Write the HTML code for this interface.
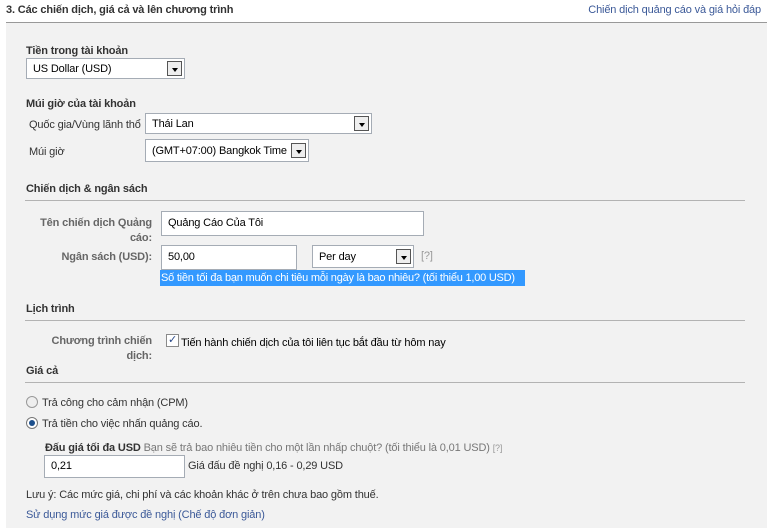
<!DOCTYPE html>
<html><head><meta charset="utf-8"><style>
*{margin:0;padding:0;box-sizing:border-box}
body{width:767px;height:528px;background:#fff;font-family:"Liberation Sans",Tahoma,sans-serif;font-size:11px;letter-spacing:-0.15px;color:#333;position:relative;overflow:hidden}
.a{position:absolute;white-space:nowrap;line-height:13px}
.b{font-weight:bold}
.bg{position:absolute;left:6px;top:23px;right:0;bottom:0;background:#f2f2f2}
.ln{position:absolute;height:1px;background:#b3b3b3}
.sel,.inp{position:absolute;background:#fff;border:1px solid #a5acb5;padding-left:6px;line-height:20px;color:#000}
.sel .ar{position:absolute;right:2px;top:2px;width:15px;height:15px;border:1px solid #555;background:#eee}
.sel .ar:after{content:"";position:absolute;left:4px;top:6px;border:3px solid transparent;border-top:4px solid #000}
.lab{color:#666;font-weight:bold;text-align:right;width:130px}
</style></head><body>
<div class="bg"></div>
<div class="a b" style="left:6px;top:4px">3. Các chiến dịch, giá cả và lên chương trình</div>
<div class="a" style="right:6px;top:4px;color:#3b5998">Chiến dịch quảng cáo và giá hỏi đáp</div>
<div class="ln" style="left:6px;right:0;top:22px;background:#999"></div>

<div class="a b" style="left:26px;top:45px">Tiền trong tài khoản</div>
<div class="sel" style="left:26px;top:58px;width:159px;height:21px">US Dollar (USD)<div class="ar"></div></div>
<div class="a b" style="left:26px;top:98px">Múi giờ của tài khoản</div>
<div class="a" style="left:29px;top:119px">Quốc gia/Vùng lãnh thổ</div>
<div class="sel" style="left:145px;top:113px;width:227px;height:21px;line-height:20px">Thái Lan<div class="ar"></div></div>
<div class="a" style="left:29px;top:146px">Múi giờ</div>
<div class="sel" style="left:145px;top:139px;width:164px;height:23px;line-height:23px;padding-left:6px">(GMT+07:00) Bangkok Time<div class="ar" style="top:3px"></div></div>

<div class="a b" style="left:26px;top:183px">Chiến dịch &amp; ngân sách</div>
<div class="ln" style="left:25px;right:22px;top:200px"></div>
<div class="a lab" style="left:22px;top:216px;line-height:15px">Tên chiến dịch Quảng<br>cáo:</div>
<div class="inp" style="left:161px;top:211px;width:263px;height:25px;line-height:23px">Quảng Cáo Của Tôi</div>
<div class="a lab" style="left:22px;top:251px">Ngân sách (USD):</div>
<div class="inp" style="left:161px;top:245px;width:136px;height:25px;line-height:23px">50,00</div>
<div class="sel" style="left:312px;top:245px;width:102px;height:23px;line-height:23px">Per day<div class="ar" style="top:3px"></div></div>
<div class="a" style="left:421px;top:250px;color:#999">[?]</div>
<div class="a" style="left:160px;top:270px;width:365px;height:16px;background:#3399ff;color:#fff;line-height:16px;padding-left:1px;letter-spacing:-0.22px">Số tiền tối đa bạn muốn chi tiêu mỗi ngày là bao nhiêu? (tối thiểu 1,00 USD)</div>

<div class="a b" style="left:26px;top:303px">Lịch trình</div>
<div class="ln" style="left:25px;right:22px;top:320px"></div>
<div class="a lab" style="left:22px;top:334px;line-height:15px">Chương trình chiến<br>dịch:</div>
<div class="a" style="left:166px;top:334px;width:13px;height:13px;border:1px solid #8a8a8a;background:#fff;font-size:11px;line-height:11px;text-align:center;color:#2a4a8a">✓</div>
<div class="a" style="left:181px;top:337px;color:#000">Tiến hành chiến dịch của tôi liên tục bắt đầu từ hôm nay</div>

<div class="a b" style="left:26px;top:365px">Giá cả</div>
<div class="ln" style="left:25px;right:22px;top:382px"></div>
<div class="a" style="left:26px;top:396px;width:12px;height:12px;border-radius:50%;border:1px solid #999;background:#eee"></div>
<div class="a" style="left:42px;top:397px">Trả công cho cảm nhận (CPM)</div>
<div class="a" style="left:26px;top:417px;width:12px;height:12px;border-radius:50%;border:1px solid #777;background:#fff"></div>
<div class="a" style="left:29px;top:420px;width:6px;height:6px;border-radius:50%;background:#1c4f8c"></div>
<div class="a" style="left:42px;top:418px">Trả tiền cho việc nhấn quảng cáo.</div>
<div class="a" style="left:45px;top:442px"><span class="b">Đấu giá tối đa USD</span> <span style="color:#777">Bạn sẽ trả bao nhiêu tiền cho một lần nhấp chuột? (tối thiểu là 0,01 USD)</span> <span style="color:#999;font-size:9px;vertical-align:top">[?]</span></div>
<div class="inp" style="left:44px;top:455px;width:141px;height:23px;line-height:21px">0,21</div>
<div class="a" style="left:188px;top:460px">Giá đấu đề nghị 0,16 - 0,29 USD</div>

<div class="a" style="left:26px;top:489px">Lưu ý: Các mức giá, chi phí và các khoản khác ở trên chưa bao gồm thuế.</div>
<div class="a" style="left:26px;top:509px;color:#3b5998">Sử dụng mức giá được đề nghị (Chế độ đơn giản)</div>
</body></html>
